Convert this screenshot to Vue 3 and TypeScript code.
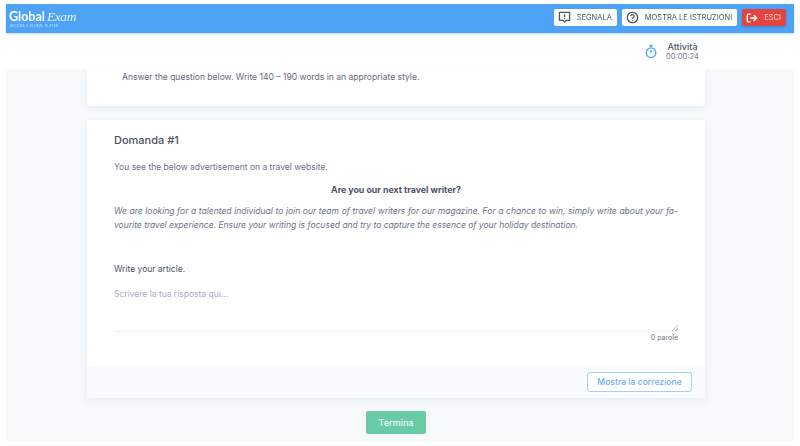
<template>
  <div class="frame">
    <header class="topbar">
      <div class="logo">
        <div class="logo-main"><span class="logo-global">Global</span><span class="logo-exam">Exam</span></div>
        <div class="logo-sub">BECOME A GLOBAL PLAYER</div>
      </div>
      <div class="actions">
        <button class="btn-top">
          <svg width="13" height="13" viewBox="0 0 14 14" fill="none" stroke="#4a5568" stroke-width="1.4">
            <path d="M1.5 1.5h11v8.5H8.5L7 12l-1.5-2H1.5z" stroke-linejoin="round" />
            <path d="M7 3.6v3M7 7.6v1" />
          </svg>
          SEGNALA
        </button>
        <button class="btn-top">
          <svg width="13" height="13" viewBox="0 0 14 14" fill="none" stroke="#4a5568" stroke-width="1.4">
            <circle cx="7" cy="7" r="5.6" />
            <path d="M5.3 5.6a1.7 1.7 0 1 1 2.6 1.4c-.6.4-.9.7-.9 1.3M7 9.4v1" />
          </svg>
          MOSTRA LE ISTRUZIONI
        </button>
        <button class="btn-top btn-exit">
          <svg width="12" height="12" viewBox="0 0 14 14" fill="none" stroke="#fff" stroke-width="1.6" stroke-linecap="round" stroke-linejoin="round">
            <path d="M5 2.5H2.5a1 1 0 0 0-1 1v7a1 1 0 0 0 1 1H5M5.5 7h7M9.5 4l3 3-3 3" />
          </svg>
          ESCI
        </button>
      </div>
    </header>

    <div class="subbar">
      <svg class="timer" width="12" height="15" viewBox="0 0 13 15" fill="none" stroke="#4fa3f7" stroke-width="1.4">
        <circle cx="6.5" cy="8.8" r="5.2" />
        <path d="M4.6 1h3.8M6.5 1v2.5M6.5 6v3" />
      </svg>
      <div class="activity">
        <div class="activity-name">Attività</div>
        <div class="activity-time">00:00:24</div>
      </div>
    </div>

    <main class="content">
      <section class="card card-intro">
        <p class="intro">Answer the question below. Write 140 – 190 words in an appropriate style.</p>
      </section>

      <section class="card card-question">
        <div class="question-body">
          <h2 class="title">Domanda #1</h2>
          <p class="line">You see the below advertisement on a travel website.</p>
          <p class="headline">Are you our next travel writer?</p>
          <p class="quote">
            <span class="quote-first">We are looking for a talented individual to join our team of travel writers for our magazine. For a chance to win, simply write about your fa-</span>
            <span>vourite travel experience. Ensure your writing is focused and try to capture the essence of your holiday destination.</span>
          </p>
          <p class="line prompt">Write your article.</p>
          <textarea class="answer" placeholder="Scrivere la tua risposta qui..."></textarea>
          <div class="count">0 parole</div>
        </div>
        <div class="card-footer">
          <button class="btn-outline">Mostra la correzione</button>
        </div>
      </section>

      <button class="btn-finish">Termina</button>
    </main>
  </div>
</template>

<script setup lang="ts">
</script>

<style>
html,
body {
  margin: 0;
  background: #fff;
}
</style>

<style scoped>
.frame {
  height: 446px;
  box-sizing: border-box;
  padding: 4px 6px;
  display: flex;
  flex-direction: column;
  overflow: hidden;
  font-family: Inter, "Liberation Sans", sans-serif;
  color: #4a5568;
  filter: blur(0.35px);
}

.topbar {
  height: 29px;
  flex: none;
  background: #4fa3f7;
  display: flex;
  align-items: center;
  justify-content: space-between;
  padding: 0 8px 0 3px;
  box-shadow: 0 1px 2px rgba(79, 163, 247, 0.4);
  position: relative;
}

.logo {
  color: #fff;
  width: 70px;
  padding-top: 1px;
}

.logo-main {
  display: flex;
  align-items: baseline;
  height: 14px;
  line-height: 14px;
}

.logo-global {
  font-size: 12.5px;
  font-weight: 700;
  font-family: Lato, sans-serif;
}

.logo-exam {
  font-family: "Liberation Serif", serif;
  font-style: italic;
  font-size: 13.5px;
  letter-spacing: -0.4px;
  margin-left: 2px;
  color: #e6f2fe;
}

.logo-sub {
  font-size: 3px;
  letter-spacing: 0.35px;
  color: #cfe5fc;
  line-height: 5px;
  padding-left: 1px;
}

.actions {
  display: flex;
  gap: 5px;
  margin-bottom: 2px;
}

.btn-top {
  height: 17px;
  display: flex;
  align-items: center;
  gap: 6px;
  padding: 0 5px 0 4px;
  border: 0;
  border-radius: 2px;
  background: #fff;
  color: #4a5568;
  font: 400 7.5px Inter, "Liberation Sans", sans-serif;
}

.btn-exit {
  background: #e2453f;
  color: #f6cfcd;
  box-shadow: 0 1px 3px rgba(0, 0, 0, 0.2);
}

.subbar {
  height: 36px;
  flex: none;
  background: #fff;
  display: flex;
  justify-content: flex-end;
  align-items: center;
  gap: 9px;
  padding-right: 95px;
  box-sizing: border-box;
}

.activity {
  text-align: center;
}

.activity-name {
  font-size: 9px;
  font-weight: 500;
  line-height: 10px;
}

.activity-time {
  font-size: 7.6px;
  line-height: 9px;
  color: #718096;
}

.content {
  flex: 1;
  background: #f7f9fa;
  display: flex;
  flex-direction: column;
  align-items: center;
  padding-right: 8px;
}

.card {
  width: 618px;
  background: #fff;
  border-radius: 2px;
  box-shadow: 0 2px 6px rgba(79, 163, 247, 0.14);
}

.card-intro {
  height: 37px;
  flex: none;
  border-radius: 0 0 2px 2px;
}

.intro {
  margin: 2px 0 0 35px;
  font-size: 8.55px;
  line-height: 12px;
  color: #5f6880;
}

.card-question {
  margin-top: 14px;
  height: 278px;
  flex: none;
  display: flex;
  flex-direction: column;
  overflow: hidden;
}

.question-body {
  flex: 1;
  padding: 13px 27px 0;
}

.title {
  margin: 0;
  font-size: 11px;
  font-weight: 500;
  line-height: 14px;
  color: #4a5268;
}

.line {
  margin: 14px 0 0;
  font-size: 8.5px;
  line-height: 12px;
  color: #6b7289;
}

.headline {
  margin: 11px 0 0;
  font-size: 8.8px;
  font-weight: 700;
  line-height: 12px;
  text-align: center;
  color: #4a5268;
}

.quote {
  margin: 9px 0 0;
  font-size: 8.5px;
  font-style: italic;
  line-height: 13.5px;
  color: #6b7289;
}

.quote span {
  display: block;
  white-space: nowrap;
}

.quote .quote-first {
  text-align: justify;
  text-align-last: justify;
}

.prompt {
  margin-top: 31px;
  color: #4a5268;
}

.answer {
  display: block;
  width: 100%;
  height: 44px;
  box-sizing: border-box;
  margin-top: 13px;
  padding: 0;
  border: 0;
  border-bottom: 1px solid #edf2f7;
  outline: 0;
  font: 8.5px/12px Inter, "Liberation Sans", sans-serif;
  color: #4a5568;
}

.answer::placeholder {
  color: #a6aec4;
}

.answer::-webkit-resizer {
  background: no-repeat right bottom / 6px 6px linear-gradient(135deg, transparent 45%, #b8bec8 45%, #b8bec8 58%, transparent 58%, transparent 72%, #b8bec8 72%, #b8bec8 85%, transparent 85%);
}

.count {
  margin-top: 1px;
  text-align: right;
  font-size: 7px;
  line-height: 9px;
  color: #6b7289;
}

.card-footer {
  height: 33px;
  flex: none;
  background: #fafbfe;
  display: flex;
  justify-content: flex-end;
  align-items: center;
  padding-right: 13px;
}

.btn-outline {
  height: 20px;
  width: 105px;
  padding: 0;
  border: 1px solid #a4cffb;
  border-radius: 3px;
  background: #fff;
  color: #6aaef5;
  font: 500 8.6px Inter, "Liberation Sans", sans-serif;
}

.btn-finish {
  margin-top: 13px;
  width: 60px;
  height: 23px;
  padding: 0;
  border: 0;
  border-radius: 2px;
  background: #68cba6;
  color: #eefaf5;
  font: 500 9px Inter, "Liberation Sans", sans-serif;
}
</style>
